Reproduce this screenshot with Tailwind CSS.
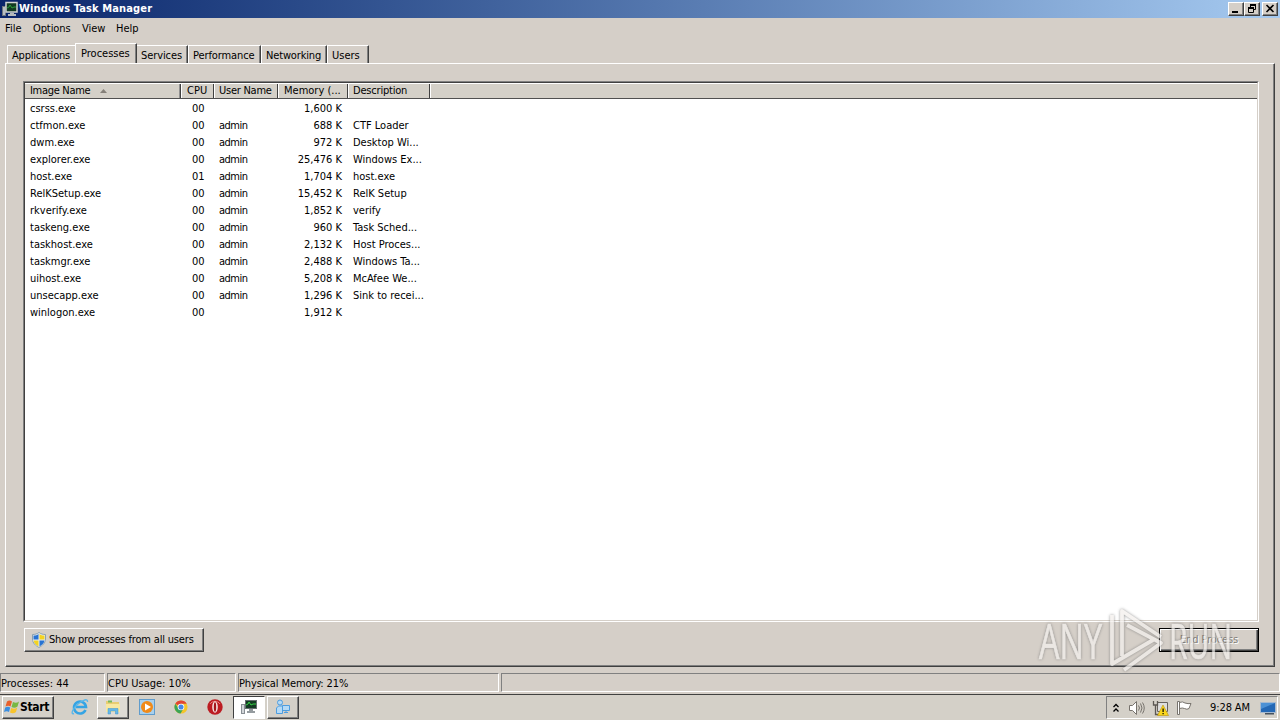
<!DOCTYPE html>
<html lang="en">
<head>
    <meta charset="UTF-8">
    <meta name="viewport" content="width=device-width, initial-scale=1.0">
    <title>Windows Task Manager</title>
    <script src="https://cdn.jsdelivr.net/npm/@tailwindcss/browser@4"></script>
</head>
<body class="relative w-[1280px] h-[720px] overflow-hidden flex flex-col bg-[#d5cfc8] text-black text-[11px] leading-[14px] whitespace-nowrap font-['Tahoma','DejaVu_Sans_Condensed','DejaVu_Sans',sans-serif]">

    <!-- Title bar -->
    <header class="h-[18px] shrink-0 flex items-center pl-[2px] pr-[2px] bg-linear-to-r from-[#0a246a] to-[#a6caf0] text-white">
        <svg class="w-4 h-4 mr-[1px]" viewBox="0 0 16 16">
            <rect x="0.5" y="5.5" width="3" height="9" fill="#b8bec4" stroke="#70777e"/>
            <rect x="4" y="1.500" width="11" height="9.500" fill="#123a22" stroke="#d0d3d0" stroke-width="1.500"/>
            <path d="M5 7l2-1 1-2 2 3 2-1 2 0" fill="none" stroke="#2c9c3a"/>
            <path d="M8 12h4v1h2v2H6v-2h2z" fill="#b5babd"/>
        </svg>
        <h1 class="w-[134px] font-bold tracking-[0.13px]">Windows Task Manager</h1>
        <div class="ml-auto flex">
            <button class="w-4 h-[14px] bg-[#d5cfc8] border border-t-white border-l-white border-r-[#404040] border-b-[#404040] shadow-[inset_-1px_-1px_0_#808080]"><svg class="w-[14px] h-3" viewBox="0 0 14 12"><path d="M3 8h6v2H3z"/></svg></button>
            <button class="w-4 h-[14px] bg-[#d5cfc8] border border-t-white border-l-white border-r-[#404040] border-b-[#404040] shadow-[inset_-1px_-1px_0_#808080]"><svg class="w-[14px] h-3" viewBox="0 0 14 12" fill="none" stroke="#000"><path d="M5 1.5h6M5.500 1v3M10.500 1v5.500H9M5 2.500h6M3 4.500h6M3 5.500h6M3.500 4v5.500h5V4"/></svg></button>
            <button class="ml-[2px] w-4 h-[14px] bg-[#d5cfc8] border border-t-white border-l-white border-r-[#404040] border-b-[#404040] shadow-[inset_-1px_-1px_0_#808080]"><svg class="w-[14px] h-3" viewBox="0 0 14 12"><path d="M3.500 2l7 7M10.500 2l-7 7" stroke="#000" stroke-width="1.600"/></svg></button>
        </div>
    </header>

    <!-- Menu -->
    <nav class="h-5 shrink-0 flex items-center pt-[2px] pl-[5px]">
        <span class="w-7">File</span>
        <span class="w-[49px] tracking-[-0.1px]">Options</span>
        <span class="w-[34px]">View</span>
        <span>Help</span>
    </nav>

    <!-- Tabs -->
    <div class="h-[25px] shrink-0 flex items-end pl-[7px]">
        <div class="w-[68px] h-[18px] pl-[4px] pt-[3px] tracking-[-0.2px] border-t border-l border-white">Applications</div>
        <div class="w-[62px] h-[20px] pl-[5px] pt-[3px] border-t border-l border-white border-r border-r-[#404040] shadow-[inset_-1px_0_0_#808080]">Processes</div>
        <div class="w-[51px] h-[18px] pl-[4px] pt-[3px] tracking-[-0.1px] border-t border-t-white border-r border-r-[#404040] shadow-[inset_-1px_0_0_#808080]">Services</div>
        <div class="w-[73px] h-[18px] pl-[4px] pt-[3px] tracking-[-0.1px] border-t border-l border-white border-r border-r-[#404040] shadow-[inset_-1px_0_0_#808080]">Performance</div>
        <div class="w-[66px] h-[18px] pl-[4px] pt-[3px] tracking-[-0.15px] border-t border-l border-white border-r border-r-[#404040] shadow-[inset_-1px_0_0_#808080]">Networking</div>
        <div class="w-[42px] h-[18px] pl-[4px] pt-[3px] border-t border-l border-white border-r border-r-[#404040] shadow-[inset_-1px_0_0_#808080]">Users</div>
    </div>

    <!-- Processes page -->
    <main class="h-[604px] shrink-0 mx-[5px] flex flex-col pl-[18px] pr-[15px] pt-[17px] border border-t-white border-l-white border-r-[#404040] border-b-[#404040] shadow-[inset_-1px_-1px_0_#808080]">
        <div class="-ml-px w-[1236px] h-[541px] border border-t-[#808080] border-l-[#808080] border-r-white border-b-white">
            <div class="h-full bg-white border-t border-l border-[#404040] border-r border-b border-r-[#d5cfc8] border-b-[#d5cfc8]">
                <div class="h-4 flex bg-[#d4d0c8] border-b border-[#505050] border-t border-t-white">
                    <div class="w-[156px] pl-[5px] flex border-r border-[#404040] shadow-[inset_-1px_0_0_#909090]"><span class="w-[70px] tracking-[-0.3px]">Image Name</span><svg class="w-[7px] h-4" viewBox="0 0 7 16"><path d="M0 9L3.500 5L7 9z" fill="#858079"/></svg></div>
                    <div class="w-[33px] pl-[5px] border-l border-l-white border-r border-r-[#404040]">CPU</div>
                    <div class="w-16 pl-[4px] tracking-[-0.25px] border-l border-l-white border-r border-r-[#404040]">User Name</div>
                    <div class="w-[70px] pl-[5px] border-l border-l-white border-r border-r-[#404040]">Memory (...</div>
                    <div class="w-[82px] pl-[4px] tracking-[-0.2px] border-l border-l-white border-r border-r-[#404040]">Description</div>
                    <div class="flex-1 border-l border-white"></div>
                </div>
                <div id="rows" class="pt-[1px]"></div>
            </div>
        </div>
        <div class="mt-[6px] flex justify-between">
            <button class="w-[180px] h-6 flex items-center pl-[6px] border border-t-white border-l-white border-r-[#404040] border-b-[#404040] shadow-[inset_-1px_-1px_0_#808080]">
                <svg class="w-4 h-4 mr-[2px] shrink-0" viewBox="0 0 16 16">
                    <path d="M8 0.500C6 2 4 2.500 1.500 2.500V7c0 4 3 6.500 6.500 8.500 3.500-2 6.500-4.500 6.500-8.500V2.500C12 2.500 10 2 8 .5z" fill="#e8edf1" stroke="#8aa0b0"/>
                    <path d="M7.500 2v5.500H2.500V3.500C5 3.500 6 3 7.500 2zM8.500 8.500h5c-.5 3-2.500 4.500-5 6z" fill="#2873d2"/>
                    <path d="M8.500 2v5.500h5V3.500C11 3.500 10 3 8.500 2zM7.500 8.500h-5c.5 3 2.500 4.500 5 6z" fill="#f3d322"/>
                </svg>
                <span class="tracking-[-0.18px]">Show processes from all users</span>
            </button>
            <button class="w-[100px] h-6 border border-black text-[#85817b] tracking-[-0.1px] [text-shadow:1px_1px_0_white] shadow-[inset_1px_1px_0_white,inset_-1px_-1px_0_#404040,inset_-2px_-2px_0_#808080]">End Process</button>
        </div>
    </main>

    <!-- Status bar -->
    <div class="mt-[6px] h-[19px] shrink-0 flex gap-[2px]">
        <div class="w-[105px] pt-[3px] border border-t-[#808080] border-l-[#808080] border-r-white border-b-white">Processes: 44</div>
        <div class="w-[129px] pt-[3px] border border-t-[#808080] border-l-[#808080] border-r-white border-b-white">CPU Usage: 10%</div>
        <div class="w-[261px] pt-[3px] border border-t-[#808080] border-l-[#808080] border-r-white border-b-white tracking-[-0.1px]">Physical Memory: 21%</div>
        <div class="flex-1 border border-t-[#808080] border-l-[#808080] border-r-white border-b-white"></div>
    </div>

    <!-- Taskbar -->
    <footer class="mt-[2px] h-[26px] shrink-0 flex border-t border-[#404040] bg-[#d4d0c8] pl-[2px] pr-[2px]">
        <button class="mt-px w-[52px] h-[23px] flex items-center pl-[1px] pb-[2px] border border-t-white border-l-white border-r-[#404040] border-b-[#404040] shadow-[inset_-1px_-1px_0_#808080]">
            <svg class="w-4 h-4" viewBox="0 0 16 16">
                <path d="M3 2.500C5 1 6.500 1.500 8 2.500L6.500 7.500C5 6.500 3.500 6.500 1.500 7.500z" fill="#e8602c"/>
                <path d="M9 3c2 1 4 1 6-.5L13.500 7.500c-2 1.500-4 1.500-6 .5z" fill="#79b843"/>
                <path d="M1.200 8.500c2-1 3.500-1 5 0L5 13c-1.500-1-3-1-5 0z" fill="#3a8ee0"/>
                <path d="M7.200 9c2 1 4 1 6-.5L12 13c-2 1.500-4 1.500-6 .5z" fill="#f8c42c"/>
            </svg>
            <b class="text-[12px] tracking-[-0.3px]">Start</b>
        </button>
        <div class="w-[42px] flex items-center justify-center pl-[9px] pb-[2px]">
            <svg class="w-[18px] h-[18px]" viewBox="0 0 18 18">
                <path d="M14.500 12A6 6 0 1 1 15 9H5" fill="none" stroke="#35a4e4" stroke-width="2.600"/>
                <path d="M3 15.500C-1 17 2 10 7 6s10-6 9.500-2" fill="none" stroke="#5bb7ea" stroke-width="1.400"/>
            </svg>
        </div>
        <div class="mt-px ml-px w-[32px] h-[23px] flex items-center justify-center pb-px bg-[#dedbd4] border border-t-white border-l-white border-r-[#404040] border-b-[#404040] shadow-[inset_-1px_-1px_0_#808080]">
            <svg class="w-4 h-4" viewBox="0 0 16 16">
                <path d="M1 2h5l1 1h7v10H1z" fill="#e8cd72"/>
                <path d="M3 1.500h4v2H3z" fill="#74b85c"/>
                <path d="M1 5h14v8H1z" fill="#f8e8a0"/>
                <path d="M3 15V9.500h10V15h-2.500v-3h-5v3z" fill="#65b8e8" stroke="#3c94cc" stroke-width=".5"/>
            </svg>
        </div>
        <div class="w-[36px] flex items-center justify-center pb-[2px]">
            <svg class="w-4 h-4" viewBox="0 0 16 16">
                <rect x=".5" y=".5" width="15" height="15" fill="#a8d0ed" stroke="#609ccc"/>
                <circle cx="8" cy="8" r="6" fill="#f08a19"/>
                <path d="M6 4.500v7L12 8z" fill="#fff"/>
            </svg>
        </div>
        <div class="w-[32px] flex items-center justify-center pb-[2px]">
            <svg class="w-[14px] h-[14px]" viewBox="0 0 16 16">
                <circle cx="8" cy="8" r="7.500" fill="#f4c52a"/>
                <path d="M8 8L1.500 4.200A7.500 7.500 0 0 1 14.500 4.200H8z" fill="#e04436"/>
                <path d="M1.500 4.200A7.500 7.500 0 0 0 7.500 15.500L11 9.500 5 9.500z" fill="#3ba457"/>
                <circle cx="8" cy="8" r="3.800" fill="#fff"/><circle cx="8" cy="8" r="2.900" fill="#4688e8"/>
            </svg>
        </div>
        <div class="w-[35px] flex items-center justify-center pb-[2px]">
            <svg class="w-4 h-4" viewBox="0 0 16 16">
                <circle cx="8" cy="8" r="7.700" fill="#bc1c22"/>
                <path d="M3 5a6 6 0 0 1 10 0" stroke="#e67b77" fill="none"/>
                <ellipse cx="8" cy="8" rx="2.800" ry="5.800" fill="#f5e5e3"/><ellipse cx="8" cy="8" rx="1.200" ry="4.700" fill="#a3161b"/>
            </svg>
        </div>
        <div class="mt-px ml-px w-[32px] h-[23px] flex items-center justify-center pb-px bg-white border border-t-[#404040] border-l-[#404040] border-r-white border-b-white">
            <svg class="w-4 h-4" viewBox="0 0 16 16">
                <rect x=".5" y="5.500" width="3" height="9" fill="#d3d6d9" stroke="#888e93"/>
                <rect x="4.500" y="1.500" width="11" height="8" fill="#123a22" stroke="#666e70"/>
                <path d="M5 6l2-1 1-2 2 3 2-1 3 0" fill="none" stroke="#37cf45"/>
                <path d="M8 10h4v2h2v2H6v-2h2z" fill="#959b9f"/>
            </svg>
        </div>
        <div class="mt-px ml-[2px] w-[32px] h-[23px] flex items-center justify-center pb-px border border-t-white border-l-white border-r-[#404040] border-b-[#404040] shadow-[inset_-1px_-1px_0_#808080]">
            <svg class="w-4 h-4" viewBox="0 0 16 16" fill="#b5daf6" stroke="#4d9de0">
                <circle cx="5" cy="3.500" r="2.500"/><path d="M1.500 14.500V9l2-2h4v7.500zM7.500 6.500h7v5h-7zM9 13.500h4M11 11.500v2"/>
            </svg>
        </div>

        <div class="mt-px ml-auto w-[172px] h-[23px] flex items-center pl-[5px] border-l border-t border-[#808080] border-b border-b-white border-r border-r-white">
            <svg class="w-2 h-[10px]" viewBox="0 0 8 10" fill="none" stroke="#000" stroke-width="1.300"><path d="M1.500 4L4 1.500 6.500 4M1.500 8.500L4 6l2.500 2.500"/></svg>
            <svg class="ml-2 w-[17px] h-4" viewBox="0 0 17 16" fill="none" stroke="#77736d"><path d="M1.500 5.500h3l4-4v13l-4-4h-3z" fill="#fff"/><path d="M10.500 5.500q2 2.500 0 5M12.500 3.500q3 4.500 0 9M14.500 2.500q3.500 5.500 0 11"/></svg>
            <svg class="ml-[7px] w-[17px] h-4" viewBox="0 0 17 16"><path d="M5.500 2.500h10v9h-10z" fill="#dedede" stroke="#66625e"/><path d="M1.500 1v4h4V1M3.500 5v9.500h3" fill="none" stroke="#5c5853" stroke-width="1.300"/><path d="M11 5l5.500 10.500h-11z" fill="#fbd61b" stroke="#b99209" stroke-width=".6"/><path d="M10.500 8.500h1.200v3.500h-1.200zM10.500 13h1.200v1.300h-1.200z"/></svg>
            <svg class="ml-[7px] w-4 h-4" viewBox="0 0 16 16" fill="#fff" stroke="#77736d"><path d="M3.500 2.500q3-1.500 5.500.5 3 1 6 .5l-2 5q-2 1.500-4.500 0-2-1-5 0z"/><path d="M1.500 1.500h2v13h-2z"/></svg>
            <span class="ml-[18px] w-[50px] tracking-[-0.1px]">9:28 AM</span>
            <svg class="w-4 h-4" viewBox="0 0 16 16"><path d="M.5 2.500h15v10H.5z" fill="#2468b5" stroke="#a5b9d0"/><path d="M1 3h14L1 9z" fill="#4c91d5"/><path d="M5 13h9v1.500H5z" fill="#46525e"/></svg>
        </div>
    </footer>

    <!-- Watermark over the window -->
    <svg class="absolute left-[1030px] top-[600px] w-[215px] h-[76px] opacity-75 drop-shadow-[0_0_1.5px_#777]" viewBox="0 0 215 76">
        <g fill="#f3f0ed" stroke="#f3f0ed" stroke-width=".7" font-family="Open Sans, sans-serif" font-size="49">
            <text x="9" y="59" textLength="63" lengthAdjust="spacingAndGlyphs">ANY</text>
            <text x="139" y="59" textLength="63" lengthAdjust="spacingAndGlyphs">RUN</text>
        </g>
        <g fill="none" stroke="#f3f0ed" stroke-width="3.800" stroke-linejoin="round">
            <path d="M82 15v49l41-24M92 56V11l39 26M97 25l34 18-37 27"/>
        </g>
    </svg>

    <script>
        const processes = [
            ["csrss.exe", "00", "", "1,600 K", ""],
            ["ctfmon.exe", "00", "admin", "688 K", "CTF Loader"],
            ["dwm.exe", "00", "admin", "972 K", "Desktop Wi..."],
            ["explorer.exe", "00", "admin", "25,476 K", "Windows Ex..."],
            ["host.exe", "01", "admin", "1,704 K", "host.exe"],
            ["RelKSetup.exe", "00", "admin", "15,452 K", "RelK Setup"],
            ["rkverify.exe", "00", "admin", "1,852 K", "verify"],
            ["taskeng.exe", "00", "admin", "960 K", "Task Sched..."],
            ["taskhost.exe", "00", "admin", "2,132 K", "Host Proces..."],
            ["taskmgr.exe", "00", "admin", "2,488 K", "Windows Ta..."],
            ["uihost.exe", "00", "admin", "5,208 K", "McAfee We..."],
            ["unsecapp.exe", "00", "admin", "1,296 K", "Sink to recei..."],
            ["winlogon.exe", "00", "", "1,912 K", ""]
        ];

        document.getElementById("rows").innerHTML = processes.map(p => `
            <div class="h-[17px] pl-[5px] flex items-center">
                <span class="w-[162px]">${p[0]}</span>
                <span class="w-[27px]">${p[1]}</span>
                <span class="w-[52px] tracking-[-0.5px]">${p[2]}</span>
                <span class="w-[71px] text-right">${p[3]}</span>
                <span class="ml-[11px]">${p[4]}</span>
            </div>`).join("");
    </script>
</body>
</html>
